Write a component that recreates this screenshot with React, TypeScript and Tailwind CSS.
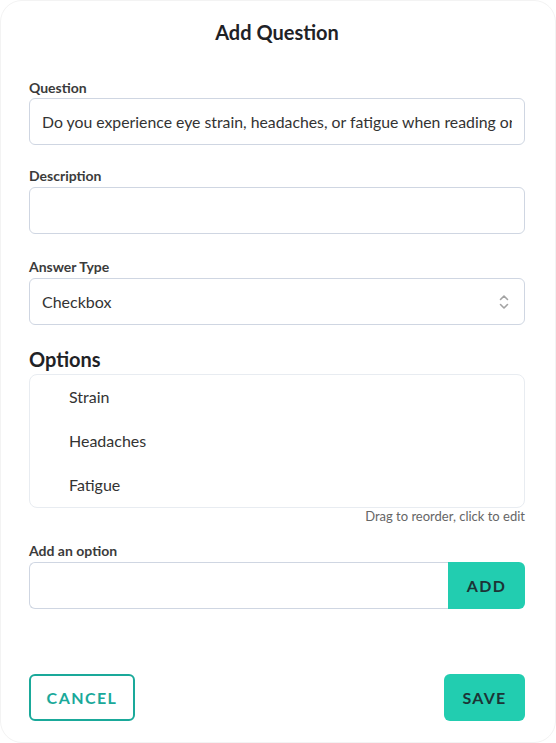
import { useState } from 'react'

const OPTIONS = ['Strain', 'Headaches', 'Fatigue']

function UpDownIcon() {
  return (
    <svg width="12" height="16" viewBox="0 0 12 16" fill="none" stroke="#a3a3a3" strokeWidth="1.6" strokeLinecap="round" strokeLinejoin="round">
      <path d="M2.5 5.5 6 2 9.5 5.5" />
      <path d="M2.5 10.5 6 14 9.5 10.5" />
    </svg>
  )
}

export default function App() {
  const [option, setOption] = useState('')

  return (
    <div className="min-h-screen bg-white" style={{ fontFamily: 'Lato, "Noto Sans", sans-serif' }}>
      <div className="h-[743px] rounded-[22px] border border-[#f3f3f3] pl-[28px] pr-[30px] pt-[17px] flex flex-col">
        <h1 className="text-center text-[20px] leading-[28px] font-bold text-[#1f2226]">Add Question</h1>

        <label className="mt-[33px] mb-[1px] text-[14px] leading-[18px] font-bold text-[#3b3b3b]">Question</label>
        <input
          className="h-[47px] w-full rounded-[6px] border border-[#cfd6e2] px-[12px] text-[15.8px] text-[#333] outline-none"
          defaultValue="Do you experience eye strain, headaches, or fatigue when reading or using screens for long periods?"
        />

        <label className="mt-[22px] mb-[2px] text-[14px] leading-[18px] font-bold text-[#3b3b3b]">Description</label>
        <input className="h-[47px] w-full rounded-[6px] border border-[#cfd6e2] px-[12px] text-[16px] text-[#333] outline-none" />

        <label className="mt-[24px] mb-[2px] text-[14px] leading-[18px] font-bold text-[#3b3b3b]">Answer Type</label>
        <div className="h-[47px] w-full rounded-[6px] border border-[#cfd6e2] pl-[12px] pr-[14px] flex items-center justify-between text-[16px] text-[#333]">
          <span>Checkbox</span>
          <UpDownIcon />
        </div>

        <h2 className="mt-[22px] mb-[3px] text-[20px] leading-[24px] font-bold text-[#1f2226]">Options</h2>
        <div className="rounded-[8px] border border-[#e8ecf1]">
          {OPTIONS.map(o => (
            <div key={o} className="h-[44px] pl-[39px] flex items-center text-[16px] text-[#333]">{o}</div>
          ))}
        </div>
        <p className="text-right text-[13px] leading-[16px] text-[#666]">Drag to reorder, click to edit</p>

        <label className="mt-[18px] mb-[2px] text-[14px] leading-[18px] font-bold text-[#3b3b3b]">Add an option</label>
        <div className="flex h-[47px]">
          <input
            className="flex-1 min-w-0 rounded-l-[6px] border border-r-0 border-[#cfd6e2] px-[12px] text-[16px] text-[#333] outline-none"
            value={option}
            onChange={e => setOption(e.target.value)}
          />
          <button className="w-[77px] rounded-r-[6px] bg-[#22cdb0] text-[16px] font-bold tracking-[0.08em] text-[#1c3436]">ADD</button>
        </div>

        <div className="mt-[65px] flex justify-between">
          <button className="h-[47px] w-[106px] rounded-[6px] border-2 border-[#1aa99a] text-[16px] font-bold tracking-[0.09em] text-[#1aa99a]">CANCEL</button>
          <button className="h-[47px] w-[81px] rounded-[6px] bg-[#22cdb0] text-[16px] font-bold tracking-[0.08em] text-[#1c3436]">SAVE</button>
        </div>
      </div>
    </div>
  )
}
